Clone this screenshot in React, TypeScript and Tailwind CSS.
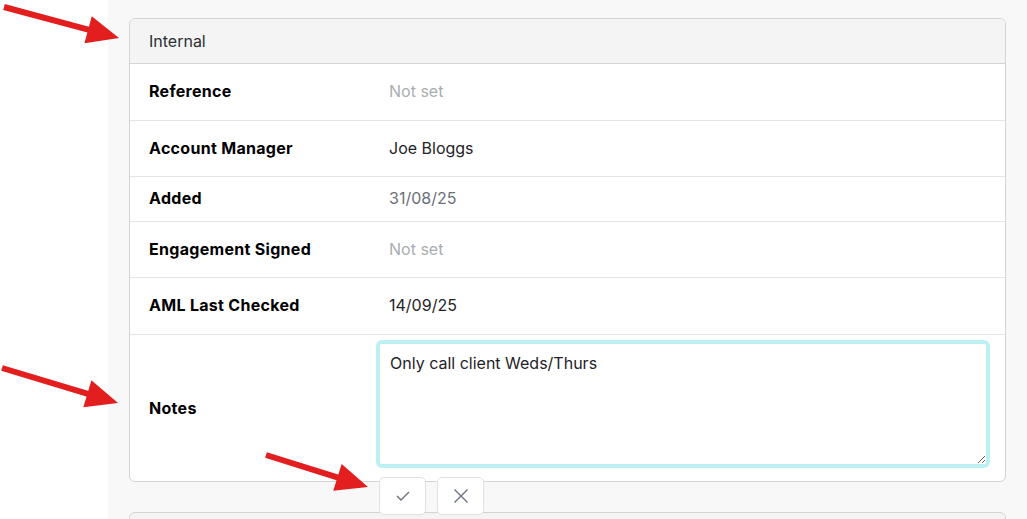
import React from "react";

type Row = { label: string; value: string; tone: "muted" | "dim" | "dark"; h: string };

const rows: Row[] = [
  { label: "Reference", value: "Not set", tone: "muted", h: "h-[57px]" },
  { label: "Account Manager", value: "Joe Bloggs", tone: "dark", h: "h-[56px]" },
  { label: "Added", value: "31/08/25", tone: "dim", h: "h-[45px]" },
  { label: "Engagement Signed", value: "Not set", tone: "muted", h: "h-[56px]" },
  { label: "AML Last Checked", value: "14/09/25", tone: "dark", h: "h-[57px]" },
];

const toneClass = {
  muted: "text-[#a9adb3]",
  dim: "text-[#6b7078]",
  dark: "text-[#1f2328]",
};

function Arrow({ x1, y1, x2, y2 }: { x1: number; y1: number; x2: number; y2: number }) {
  const dx = x2 - x1;
  const dy = y2 - y1;
  const len = Math.hypot(dx, dy);
  const ux = dx / len;
  const uy = dy / len;
  const head = 32;
  const half = 14;
  const bx = x2 - ux * head;
  const by = y2 - uy * head;
  const p1 = `${bx - uy * half},${by + ux * half}`;
  const p2 = `${bx + uy * half},${by - ux * half}`;
  return (
    <g>
      <line x1={x1} y1={y1} x2={bx + ux * 4} y2={by + uy * 4} stroke="#e31e1e" strokeWidth={6} />
      <polygon points={`${x2},${y2} ${p1} ${p2}`} fill="#e31e1e" />
    </g>
  );
}

export default function App() {
  return (
    <div className="relative flex h-[519px] w-[1027px] overflow-hidden bg-white font-['Inter',sans-serif]">
      <div className="w-[108px] shrink-0 bg-white" />
      <div className="flex flex-1 flex-col bg-[#f8f8f8] pl-[21px] pr-[21px] pt-[18px]">
        <div className="shrink-0 overflow-hidden rounded-[6px] border border-[#d4d4d4] bg-white">
          <div className="flex h-[45px] items-center border-b border-[#d4d4d4] bg-[#f4f4f4] px-[19px] text-[16px] text-[#2b2f33]">
            Internal
          </div>
          {rows.map((r) => (
            <div key={r.label} className={`flex ${r.h} items-center border-b border-[#e3e4e8] pb-[2px]`}>
              <div className="w-[240px] shrink-0 pl-[19px] text-[16px] font-bold tracking-[0.3px] text-black">{r.label}</div>
              <div className={`pl-[19px] text-[16px] ${toneClass[r.tone]}`}>{r.value}</div>
            </div>
          ))}
          <div className="flex h-[146px] items-start">
            <div className="flex h-full w-[240px] shrink-0 items-center pl-[19px] text-[16px] font-bold tracking-[0.3px] text-black">
              Notes
            </div>
            <div className="flex-1 pr-[15px] pt-[5px] pl-[6px]">
              <textarea
                defaultValue="Only call client Weds/Thurs"
                className="block h-[128px] w-full rounded-[6px] border-4 border-[#bcf0f2] bg-white px-[10px] py-[7px] text-[16px] text-[#1f2328] outline-none"
              />
            </div>
          </div>
        </div>
        <div className="relative z-10 -mt-[5px] flex shrink-0 gap-[11px] pl-[250px]">
          <button className="flex h-[38px] w-[47px] items-center justify-center rounded-[5px] border border-[#dfe1e6] bg-white">
            <svg width="14" height="10" viewBox="0 0 14 10" fill="none">
              <path d="M1 5l4 4 8-8" stroke="#6b7280" strokeWidth="1.4" />
            </svg>
          </button>
          <button className="flex h-[38px] w-[47px] items-center justify-center rounded-[5px] border border-[#dfe1e6] bg-white">
            <svg width="16" height="16" viewBox="0 0 16 16" fill="none">
              <path d="M1.5 1.5l13 13M14.5 1.5l-13 13" stroke="#6b7280" strokeWidth="1.4" />
            </svg>
          </button>
        </div>
        <div className="-mt-[3px] h-[30px] shrink-0 rounded-t-[6px] border border-[#d4d4d4] bg-[#f4f4f4]" />
      </div>
      <svg className="pointer-events-none absolute left-0 top-0" width="1027" height="519">
        <Arrow x1={4} y1={7} x2={119} y2={38} />
        <Arrow x1={2} y1={368} x2={118} y2={403} />
        <Arrow x1={266} y1={455} x2={368} y2={487} />
      </svg>
    </div>
  );
}
